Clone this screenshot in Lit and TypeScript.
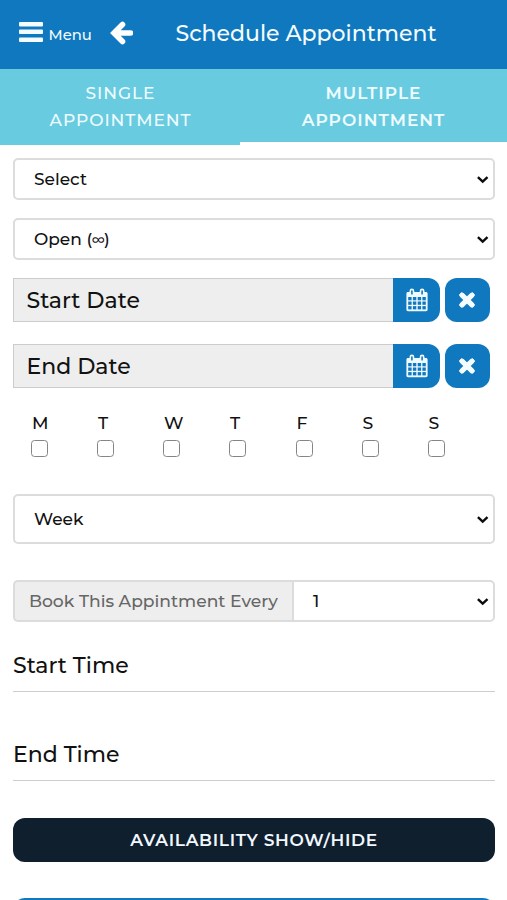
import { LitElement, html, css, svg } from "lit";

const chevron = html`<svg class="chev" width="13" height="9" viewBox="0 0 13 9"><path d="M1.900 2.200 6.700 6.700 11.500 2.200" fill="none" stroke="#0b0b0b" stroke-width="2.400"/></svg>`;

const calendarIcon = html`<svg width="24" height="24" viewBox="0 0 24 24">
  <path fill="#eefaff" fill-rule="evenodd" d="M3 4H4.500V3a2.400 2.400 0 0 1 4.800 0v1h5.400V3A2.400 2.400 0 0 1 19.500 3v1H21c.9 0 1.600.7 1.600 1.600v16c0 .9-.7 1.600-1.600 1.600H3c-.9 0-1.600-.7-1.600-1.600v-16C1.400 4.700 2.100 4 3 4Z"/>
  <g fill="#1078be">
    <rect x="6.100" y="2.200" width="1.600" height="4.400" rx=".7"/><rect x="16.300" y="2.200" width="1.600" height="4.400" rx=".7"/>
    ${[9, 13.5, 18.1].map((y) => [3.2, 7.9, 12.7, 17.4].map((x) => svg`<rect x=${x} y=${y} width="3.400" height="3.300"/>`))}
  </g></svg>`;

const crossIcon = html`<svg width="18" height="18" viewBox="0 0 18 18"><path d="M4 4.200l10 9.600M14 4.200 4 13.800" stroke="#f4fcff" stroke-width="5.200" stroke-linecap="round"/><path d="M3.800 4l10.400 10M14.200 4 3.800 14" stroke="#f4fcff" stroke-width="4" stroke-linecap="square"/></svg>`;

class AppRoot extends LitElement {
  static styles = css`
    :host { display: block; height: 900px; overflow: hidden; background: #fff; color: #111;
      font-family: Montserrat, Inter, sans-serif; font-weight: 500; }
    * { box-sizing: border-box; }
    svg { display: block; flex: none; }
    .header { display: flex; align-items: center; height: 69px; padding-left: 19px; background: #1078be; color: #f4fcff; }
    .burger { margin-bottom: 6px; }
    .menu { width: 62px; padding-left: 5.500px; font-size: 14.800px; line-height: 20px; margin-top: 1px; }
    .back { margin-bottom: 3px; }
    .title { margin: 0 0 2px 42.500px; font-size: 22px; font-weight: 500; line-height: 28px; }
    .tabs { display: flex; height: 76px; background: #68cbe0; color: #effcff; }
    .tab { padding: 11px 0 0 1px; width: 240px; height: 76px; text-align: center; font-size: 17px; line-height: 27px;
      letter-spacing: .95px; }
    .tab.active { width: 267px; font-weight: 600; letter-spacing: 1px; border-bottom: 3px solid #fff; padding-left: 0; }
    .form { display: flex; flex-direction: column; padding: 13px 12px 0 13px; }
    .select { display: flex; align-items: center; justify-content: space-between; height: 42px; padding: 0 4px 0 19px;
      border: 2px solid #dcdcdc; border-radius: 5px; font-size: 17px; }
    .second { margin-top: 18px; }
    .inf { font-size: 14px; margin: 0 -.5px; }
    .week { height: 50px; margin-top: 36px; }
    .date { display: flex; height: 44px; margin-top: 18px; }
    .date + .date { margin-top: 22px; }
    .field { display: flex; align-items: center; width: 380px; padding-left: 12.500px; background: #eee;
      border: 1px solid #ccc; border-right: 0; font-size: 22px; }
    .pick, .clear { display: flex; align-items: center; justify-content: center; background: #1078be; }
    .pick { width: 46.500px; border-radius: 0 12px 12px 0; padding-left: 1px; }
    .clear { width: 45px; margin-left: 5px; border-radius: 12px; }
    .days { display: grid; grid-template-columns: repeat(7, 66px); margin-top: 23px; padding-left: 18px; height: 47px; }
    .day { font-size: 17.300px; line-height: 24px; }
    .letter { padding-left: 1px; }
    .day.late { padding-left: 1px; }
    .late .letter { padding-left: .5px; }
    .box { width: 17px; height: 17px; margin-top: 5px; border: 1.500px solid #858585; border-radius: 3.500px; background: #fff; }
    .every { display: flex; height: 42px; margin-top: 36px; }
    .addon { display: flex; align-items: center; width: 279px; padding: 0 0 1px 14px; background: #eee; color: #666;
      border: 2px solid #dcdcdc; border-right: 0; border-radius: 5px 0 0 5px; font-size: 17.150px; }
    .every .select { flex: 1; border-radius: 0 5px 5px 0; }
    .time { font-size: 22px; line-height: 28px; height: 40px; margin-top: 30px; border-bottom: 1px solid #cdcdcd; }
    .time + .time { margin-top: 49px; }
    .show { display: flex; align-items: center; justify-content: center; height: 44px; margin-top: 37px; background: #0f1f2e;
      color: #f1f8ff; border-radius: 12px; font-size: 17px; font-weight: 600; letter-spacing: .67px; }
    .next { height: 44px; margin-top: 36px; border-radius: 12px; background: #1078be; }
  `;

  select(text: unknown, cls = "") {
    return html`<div class="select ${cls}"><span>${text}</span>${chevron}</div>`;
  }

  date(text: string) {
    return html`<div class="date"><div class="field">${text}</div>
      <div class="pick">${calendarIcon}</div><div class="clear">${crossIcon}</div></div>`;
  }

  render() {
    return html`
      <div class="header">
        <svg class="burger" width="24" height="22" viewBox="0 0 24 22"><g fill="#f4fcff"><rect y="1" width="24" height="4.500" rx="1"/><rect y="8.500" width="24" height="4.500" rx="1"/><rect y="16.500" width="24" height="4.500" rx="1"/></g></svg>
        <span class="menu">Menu</span>
        <svg class="back" width="28" height="26" viewBox="0 0 28 26"><path d="M17.500 4.500 9 13l8.500 8.500M10 13H25.500" fill="none" stroke="#fff" stroke-width="5.600" stroke-linecap="round" stroke-linejoin="miter"/></svg>
        <h1 class="title">Schedule Appointment</h1>
      </div>
      <div class="tabs">
        <div class="tab">SINGLE<br />APPOINTMENT</div>
        <div class="tab active">MULTIPLE<br />APPOINTMENT</div>
      </div>
      <div class="form">
        ${this.select("Select")}
        ${this.select(html`Open (<span class="inf">∞</span>)`, "second")}
        ${this.date("Start Date")}
        ${this.date("End Date")}
        <div class="days">
          ${["M", "T", "W", "T", "F", "S", "S"].map((d, i) => html`<div class="day ${i > 3 ? "late" : ""}"><div class="letter">${d}</div><div class="box"></div></div>`)}
        </div>
        ${this.select("Week", "week")}
        <div class="every"><div class="addon">Book This Appintment Every</div>${this.select("1")}</div>
        <div class="time">Start Time</div>
        <div class="time">End Time</div>
        <div class="show">AVAILABILITY SHOW/HIDE</div>
        <div class="next"></div>
      </div>`;
  }
}
customElements.define("app-root", AppRoot);
